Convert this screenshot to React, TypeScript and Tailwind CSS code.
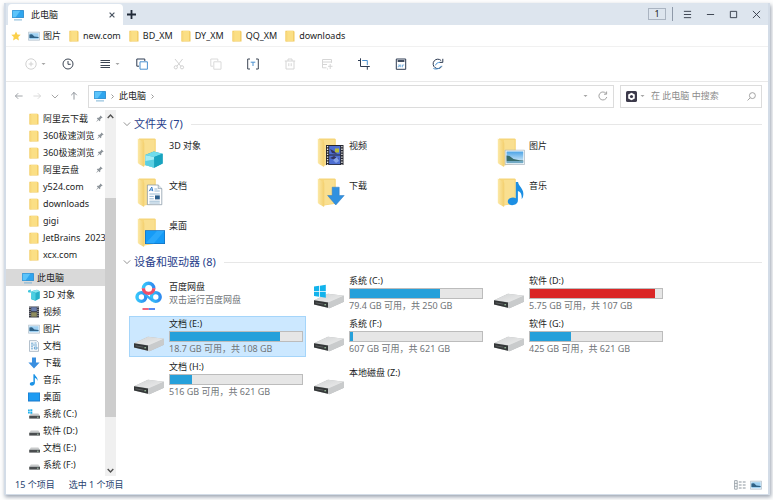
import React from 'react';

type IconName =
  | 'pc' | 'folder' | 'cube' | 'video' | 'picture' | 'doc' | 'download' | 'music' | 'desktop' | 'drive' | 'windrive';

const SmallIcon = ({ name }: { name: IconName }) => (
  <svg viewBox="0 0 12 12" className="w-3 h-3 shrink-0" aria-hidden="true">
    {name === 'pc' && (
      <>
        <rect x="0" y="1" width="12" height="8" rx="0.4" fill="#3b8fc9" />
        <path d="M.7 1.7h10.6v6.6H.7z" fill="#2fa5ee" />
        <path d="M.7 1.7h7.6L3.7 8.3h-3z" fill="#5cc4fa" />
        <path d="M2 10.4h8v1H2z" fill="#7db4d6" />
      </>
    )}
    {name === 'folder' && (
      <>
        <path d="M1.5.7h8l1 1v9.8h-9z" fill="#f0c75c" />
        <path d="M3 .9h6.3v10.2H3z" fill="#fbdf85" />
        <path d="M1.5.9 3.4 2v9.5l-1.9-.3z" fill="#f8d77a" />
      </>
    )}
    {name === 'cube' && (
      <>
        <path d="M3.5 2.2 9 .8l2.8 1.4v7.2L7.4 11.8l-4.2-1.6z" fill="#27b0c9" />
        <path d="M3.5 2.2 9 .8l2.8 1.4-4.2 1.5z" fill="#8be6f0" />
        <path d="m3.3 2.5 4.2 1.4v7.7l-4.2-1.5z" fill="#4ccfe2" />
        <path d="m0 1.6 2.8-1v3.2L0 3.2z" fill="#3fc6dd" />
      </>
    )}
    {name === 'video' && (
      <>
        <path d="M1 .5h10v11H1z" fill="#3a3d47" />
        <path d="M3.2 1.2h5.6v4H3.2z" fill="#6b7fae" />
        <path d="M3.2 6.3h5.6v4.4H3.2z" fill="#8f8d5e" />
        <path d="M2 1v10M10 1v10" stroke="#e3e3e3" strokeWidth=".8" strokeDasharray="1 1" />
      </>
    )}
    {name === 'picture' && (
      <>
        <path d="M.4 2.2h11.2v8H.4z" fill="#f4f8fb" stroke="#a9bac8" strokeWidth=".7" />
        <path d="M1.4 3.2h9.2v6H1.4z" fill="#9ed0f2" />
        <path d="m1.4 4.4 2.6-.2 2.4 2.4 4.2.4v1H1.4z" fill="#2f6287" />
      </>
    )}
    {name === 'doc' && (
      <>
        <path d="M1.5.6h7l2 2v8.8h-9z" fill="#f7fafc" stroke="#95a8b8" strokeWidth=".7" />
        <path d="M3 3.2h2.4M6.5 3h2M3 5h6M3 6.8h2M6.4 7h2.6v2H6.4zM3 8.8h2" stroke="#4e94c8" strokeWidth=".8" fill="none" />
      </>
    )}
    {name === 'download' && <path d="M4 .6h4v5h3.6L6 11.6.4 5.6H4z" fill="#3a8fe0" />}
    {name === 'music' && (
      <path d="M5.4.3h1.3c.3 2.2 3.6 2.8 2.7 6.6-.3-1.7-1.2-2.4-2.5-2.8v5c0 3-5 3.4-5.1 1 0-1.7 2.1-2.4 3.6-1.8z" fill="#1c93e6" />
    )}
    {name === 'desktop' && (
      <>
        <path d="M0 1.5h12v9H0z" fill="#1a78c8" />
        <path d="M.6 2.1h10.8v7.4H.6z" fill="#1e9bf2" />
      </>
    )}
    {(name === 'drive' || name === 'windrive') && (
      <>
        <path d="M2.8 5.4h7.6L12 8H1.2z" fill="#c9cbcc" />
        <path d="M1.2 7.8H12v2.8H1.2z" fill="#4a4d4f" />
        <path d="M9 9.2h1.6" stroke="#bfe3c5" strokeWidth=".8" />
      </>
    )}
    {name === 'windrive' && <path d="M0 1.5h1.8v1.8H0zM2.3 1.2h2v2.1h-2zM0 3.8h1.8v1.8H0zM2.3 3.8h2v2h-2z" fill="#1fb0ec" />}
  </svg>
);

const BigFolder = ({ name }: { name: IconName }) => (
  <svg viewBox="0 0 30 30" className="w-[30px] h-[30px] shrink-0" aria-hidden="true">
    <defs>
      <linearGradient id="fold" x1="0" x2="1">
        <stop offset="0" stopColor="#fce9a8" />
        <stop offset="1" stopColor="#f3cf6d" />
      </linearGradient>
      <linearGradient id="sky" x1="0" y1="0" x2="0" y2="1">
        <stop offset="0" stopColor="#4ba3e6" />
        <stop offset="1" stopColor="#e6f4fb" />
      </linearGradient>
    </defs>
    <path d="M4 .5h15.8l1 .8v24.4L9 27.5 4 26z" fill="#f6d67b" />
    <path d="M9 2h10.5v23L9 27z" fill="#f9df90" />
    <path d="M2.8.6 8.6 4q.7.5.7 1.4v22.4q0 1.4-1.2.8L3.7 25.8q-.9-.5-.9-1.4z" fill="url(#fold)" />
    {name === 'cube' && (
      <>
        <path d="m10.2 17 8.6-3.6 8.8 2.4v9.7l-8.4 4.2-9-2.6z" fill="#1d9fba" />
        <path d="m10.2 17 8.6-3.6 8.8 2.4-8.4 3.3z" fill="#6fdcec" />
        <path d="m10.2 17 9 2.1v10.6l-9-2.6z" fill="#a4edf5" />
        <path d="m10.2 23 9-1.5v8.2l-9-2.6z" fill="#5bcfe2" />
        <path d="m19.2 19.1 8.4-3.3v9.7l-8.4 4.2z" fill="#18a3bf" />
      </>
    )}
    {name === 'video' && (
      <>
        <path d="M11 7h17.5v20H11z" fill="#26272f" />
        <path d="M14.2 8h11v8.4h-11zM14.2 17.4h11v8.8h-11z" fill="#4e6fd3" />
        <path d="M20 10.5h4v4h-4z" fill="#b8bd36" />
        <path d="m15 11 4 2 3 3-5-1zM15 20l4-2 5 3-4 1z" fill="#33335f" />
        <path d="m18 22 4-3 2 4-3 2z" fill="#86a3e9" />
        <path d="M12.6 8v19M26.9 8v19" stroke="#f1f1f1" strokeWidth="1.3" strokeDasharray="1.3 1.3" />
      </>
    )}
    {name === 'picture' && (
      <>
        <path d="M10.2 12.2h19.3v14.3H10.2z" fill="#fbfdfe" stroke="#98a8b5" strokeWidth=".6" />
        <path d="M11.5 13.5h16.8v11.7H11.5z" fill="url(#sky)" />
        <path d="m11.5 17.6 3 .4 4 3 6 1.2 3.8.2v.9H11.5z" fill="#376b6b" />
        <path d="M11.5 23h16.8v2.2H11.5z" fill="#71a9c4" />
      </>
    )}
    {name === 'doc' && (
      <>
        <path d="M12.4 7h10.8l3.6 3.6v16.1H12.4z" fill="#fff" stroke="#7e8f9f" strokeWidth=".7" />
        <path d="M23.2 7v3.6h3.6" fill="#dbe5ec" stroke="#7e8f9f" strokeWidth=".6" />
        <path d="m14.2 13.2 2.6-4.2 1 4.2M15.2 12h2.4" stroke="#2874c4" strokeWidth=".9" fill="none" />
        <path d="M19.4 11h3M19.4 13h5.4M14.4 16h10.4M14.4 18.4h4.4M14.4 20.8h4.4M14.4 23.2h10.4M14.4 25h10.4" stroke="#7fa8c8" strokeWidth=".8" />
        <path d="M20 17.4h4.8v4H20z" fill="#2c5f8c" />
      </>
    )}
    {name === 'download' && <path d="M17.2 9.2h7v8.3h5L20.8 27l-8.2-9.5h4.6z" fill="#3191e0" stroke="#2a78c0" strokeWidth=".5" />}
    {name === 'music' && (
      <path d="M20.8 4h2.3c.3 4.6 6.6 6.6 5 14.2-.3 1.4-.8 2.2-1.5 2.9.6-4.8-.9-7.2-3.7-8.2v9.3c0 5.9-9.9 6.6-10.1 1.6-.2-3.6 4.8-5.1 8-3.6z" fill="#1c8fe3" />
    )}
    {name === 'desktop' && (
      <>
        <path d="M10 12.2h20V26H10z" fill="#1470bd" />
        <path d="M10.7 12.9h18.6v12.4H10.7z" fill="#159bf7" />
        <path d="M22 12.9h7.3L19 25.3h-8.3z" fill="#2aa8fb" />
      </>
    )}
  </svg>
);

const DeviceIcon = ({ kind }: { kind: string }) => (
  <svg viewBox="0 0 31 41" className="w-[31px] h-[41px] shrink-0" aria-hidden="true">
    <defs>
      <linearGradient id="metal" x1="0" y1="0" x2="1" y2="1">
        <stop offset="0" stopColor="#d2d4d5" />
        <stop offset="1" stopColor="#ededed" />
      </linearGradient>
      <linearGradient id="cloud" x1="0" x2="1">
        <stop offset="0" stopColor="#35c5fb" />
        <stop offset="1" stopColor="#2f8cf0" />
      </linearGradient>
    </defs>
    {kind === 'baidu' ? (
      <>
        <g fill="none" strokeWidth="3.4">
          <circle cx="7.4" cy="24" r="4.4" stroke="url(#cloud)" />
          <circle cx="21.8" cy="24" r="4.4" stroke="url(#cloud)" />
          <path d="m10.6 20.8 4 3.6q1 .8 2 1.6l2 1.4" stroke="#33aaf6" strokeWidth="2.4" />
          <path d="M9.4 15.4a5.2 5.2 0 0 1 10.4 0" stroke="url(#cloud)" />
          <path d="M19.8 15.2a5.2 5.2 0 0 1-10.4 0" stroke="#ef4e68" />
        </g>
        <path d="M8.5 35.2h6.3v1.6H8.5z" fill="#f03e5c" />
        <path d="M14.8 35.2H21v1.6h-6.2z" fill="#2d6bef" />
      </>
    ) : (
      <>
        <path d="M0 27.2 14 20.8 30 22.8v6L15.5 35.2 0 31.6z" fill="#b7b9ba" />
        <path d="M0 27.2 14 20.8l16 2-14 6.6z" fill="url(#metal)" />
        <path d="m14 29.6 16-6.8v6l-14.5 6.4-1.5-.3z" fill="#c9cbcc" />
        <path d="m0 27.2 14 2.2v5.4L0 31.6z" fill="#333637" />
        <path d="m1.5 29.8 8 1.4" stroke="#6b6e70" strokeWidth=".7" />
        <path d="M10.4 31.8h1.7" stroke="#b6e4b9" strokeWidth="1" />
      </>
    )}
    {kind === 'system' && (
      <path d="m0 13.6 5.1-.8v5.1H0zM5.9 12.7l5.9-.9v6.1H5.9zM0 18.7h5.1v5L0 23zM5.9 18.7h5.9v6l-5.9-.9z" fill="#12b3ec" />
    )}
  </svg>
);

const toolbar = [
  { label: '新建', color: 'text-[#d2d2d2]', caret: true, icon: <><circle cx="6" cy="6" r="5.2" /><path d="M6 3.7v4.6M3.7 6h4.6" /></> },
  { label: '历史', color: 'text-[#3d4654]', icon: <><circle cx="6" cy="6" r="5" /><path d="M6 3v3.3h2.7" /></> },
  { label: '视图', color: 'text-[#3d4654]', caret: true, icon: <path d="M1.5 2.5h9.5M1.5 4.5h9.5M1.5 7.5h9.5M1.5 9.5h9.5" /> },
  { label: '复制到', color: 'text-[#2d3b52]', icon: <><path d="M3 8.2H.8V1h8v2" /><path d="M4 3.8h7.4v7.4H4z" stroke="#4a90cf" /></> },
  { label: '剪切', color: 'text-[#d2d2d2]', icon: <><path d="m2 1 5.8 7.2M9.6 1 4 8.2" /><circle cx="2.8" cy="9.3" r="1.6" /><circle cx="9" cy="9.3" r="1.6" /></> },
  { label: '粘贴', color: 'text-[#dadada]', icon: <><path d="M3 8.2H.8V1h7v2" /><path d="M3.8 3.8h7.2v7.4H3.8z" /></> },
  { label: '重命名', color: 'text-[#3d4654]', icon: <><path d="M3 1H.7v10H3M9 1h2.3v10H9" /><path d="M3.7 4.2h4.6M6 4.2V8" stroke="#4a90cf" /></> },
  { label: '删除', color: 'text-[#d6d6d6]', icon: <path d="M.8 3h10.4M4 3V1h4v2M2 3v8h8V3M4.8 5.2v3M7.2 5.2v3" /> },
  { label: '属性', color: 'text-[#d6d6d6]', icon: <path d="M5.5 9.8h-4V1.5h9v3.3M1.5 4h9M7 8.3h4.5M9.2 6v5M2 6.5h4M6 11h1" /> },
  { label: '裁剪', color: 'text-[#2d3b52]', icon: <><path d="M0 2.5h2.5M2.5.3v8.2h9.3M9.3 8.5v3.2" /><path d="M4.2 2.5h5.1v4.6" stroke="#4a90cf" /></> },
  { label: '转为PDF', color: 'text-[#2d3b52]', icon: <><path d="M1.3 1h9.4v10.3H1.3z" /><path d="M2.6 3h6.8" strokeWidth="1.8" /><path d="M3.2 7h1.4v1.3H3.2v1M5.7 6.5v2.7M7.4 9.3V7h1.8" stroke="#5da0d8" strokeWidth=".8" /></> },
  { label: '刷新', color: 'text-[#2d3b52]', icon: <><path d="M9.8 8.4A4.7 4.7 0 1 1 9.2 2.6M10.8.8v3.6H7.2" /><path d="M1.4 10.4c1.4 1 5.6 1.2 8.2-2.6M3.4 7.4c.6-2 2.4-3 4.6-3" stroke="#4a90cf" /></> },
];

const bookmarks: { name: string; icon: IconName }[] = [
  { name: '图片', icon: 'picture' },
  { name: 'new.com', icon: 'folder' },
  { name: 'BD_XM', icon: 'folder' },
  { name: 'DY_XM', icon: 'folder' },
  { name: 'QQ_XM', icon: 'folder' },
  { name: 'downloads', icon: 'folder' },
];

const quickAccess = [
  { name: '阿里云下载', pinned: true },
  { name: '360极速浏览', pinned: true },
  { name: '360极速浏览', pinned: true },
  { name: '阿里云盘', pinned: true },
  { name: 'y524.com', pinned: true },
  { name: 'downloads' },
  { name: 'gigi' },
  { name: 'JetBrains  2023' },
  { name: 'xcx.com' },
];

const pcTree: { name: string; icon: IconName }[] = [
  { name: '3D 对象', icon: 'cube' },
  { name: '视频', icon: 'video' },
  { name: '图片', icon: 'picture' },
  { name: '文档', icon: 'doc' },
  { name: '下载', icon: 'download' },
  { name: '音乐', icon: 'music' },
  { name: '桌面', icon: 'desktop' },
  { name: '系统 (C:)', icon: 'windrive' },
  { name: '软件 (D:)', icon: 'drive' },
  { name: '文档 (E:)', icon: 'drive' },
  { name: '系统 (F:)', icon: 'drive' },
];

const folders: { name: string; icon: IconName }[] = [
  { name: '3D 对象', icon: 'cube' },
  { name: '视频', icon: 'video' },
  { name: '图片', icon: 'picture' },
  { name: '文档', icon: 'doc' },
  { name: '下载', icon: 'download' },
  { name: '音乐', icon: 'music' },
  { name: '桌面', icon: 'desktop' },
];

interface Device {
  name: string;
  kind: string;
  info?: string;
  used?: number;
  full?: boolean;
  selected?: boolean;
}

const devices: Device[] = [
  { name: '百度网盘', kind: 'baidu', info: '双击运行百度网盘' },
  { name: '系统 (C:)', kind: 'system', info: '79.4 GB 可用，共 250 GB', used: 68 },
  { name: '软件 (D:)', kind: 'drive', info: '5.75 GB 可用，共 107 GB', used: 95, full: true },
  { name: '文档 (E:)', kind: 'drive', info: '18.7 GB 可用，共 108 GB', used: 83, selected: true },
  { name: '系统 (F:)', kind: 'drive', info: '607 GB 可用，共 621 GB', used: 2 },
  { name: '软件 (G:)', kind: 'drive', info: '425 GB 可用，共 621 GB', used: 31 },
  { name: '文档 (H:)', kind: 'drive', info: '516 GB 可用，共 621 GB', used: 17 },
  { name: '本地磁盘 (Z:)', kind: 'drive' },
];

const Line = ({ d, className }: { d: string; className: string }) => (
  <svg viewBox="0 0 10 10" fill="none" stroke="currentColor" className={className} aria-hidden="true">
    <path d={d} />
  </svg>
);

const Caret = () => (
  <svg viewBox="0 0 5 4" className="w-[5px] h-1 shrink-0 text-[#a5a5a5]" aria-hidden="true">
    <path d="M.5 1h4L2.5 3z" fill="currentColor" />
  </svg>
);

const Pin = () => (
  <svg viewBox="0 0 8 8" className="w-[7px] h-[7px] mr-[2px] shrink-0" aria-hidden="true">
    <path d="m5 .5 2.6 2.4-.8.5-.5-.1-1.5 1.7.1 1.5-.7.6-1.4-1.5L.7 7.6l-.3-.2 1.8-2.3L.9 3.8l.8-.7 1.4.1 1.5-1.5V1z" fill="#8e959b" />
  </svg>
);

const SectionTitle = ({ children }: { children: React.ReactNode }) => (
  <h2 className="flex items-center gap-2 text-[11px] leading-4 text-[#27408b]">
    <button className="flex items-center gap-[3px] whitespace-nowrap">
      <Line d="m1 3 4 4 4-4" className="w-2 h-2 text-[#777]" />
      {children}
    </button>
    <span className="flex-1 h-px bg-[#e7e7e7]" />
  </h2>
);

const DeviceTile = ({ device }: { device: Device }) => (
  <button
    className={
      device.selected
        ? 'flex items-start gap-1 h-[41px] pl-[5px] pr-[3px] text-left bg-[#cce8ff] outline outline-1 -outline-offset-1 outline-[#a5d5fa]'
        : 'flex items-start gap-1 h-[41px] pl-[5px] pr-[3px] text-left'
    }
  >
    <DeviceIcon kind={device.kind} />
    <span className={device.used !== undefined ? 'flex-1 pt-[2px]' : 'flex-1 pt-2'}>
      <span className="block">{device.name}</span>
      {device.used !== undefined && (
        <span className="block h-[11px] mt-px border border-[#bcbcbc] bg-[#e6e6e6]">
          <span
            className={device.full ? 'block h-full bg-[#da2626]' : 'block h-full bg-[#26a0da]'}
            style={{ width: `${device.used}%` }}
          />
        </span>
      )}
      {device.info && <span className="block mt-px text-[#707478] whitespace-nowrap">{device.info}</span>}
    </span>
  </button>
);

export default function App() {
  return (
    <div className="h-screen bg-[#fdfdfd] pt-[3px] pl-1 pr-[3px] pb-[5px] font-['Noto_Sans','Noto_Sans_CJK_SC',sans-serif] text-[9px] leading-3 text-[#1b1d24]">
      <div className="h-full flex flex-col bg-white border-x-2 border-b border-[#d3dce7] shadow-[1px_2px_4px_#9aa3b0]">
        <header className="h-[22px] shrink-0 flex items-end bg-[#dde5ee]">
          <div className="flex items-center w-[115px] h-[21px] ml-[2px] px-1 bg-white rounded-t-sm">
            <SmallIcon name="pc" />
            <span className="flex-1 ml-[7px]">此电脑</span>
            <button aria-label="关闭标签页" className="p-1">
              <Line d="m1 1 8 8M9 1 1 9" className="w-[6px] h-[6px] stroke-2 text-[#4b5563]" />
            </button>
          </div>
          <button aria-label="新建标签页" className="h-[21px] ml-1 flex items-center">
            <Line d="M5 0v10M0 5h10" className="w-[9px] h-[9px] stroke-2 text-[#1f2937]" />
          </button>
          <div className="flex-1" />
          <div className="flex items-center h-[22px]">
            <button className="w-[18px] h-3 border border-[#aab4c1] leading-[10px] text-center">1</button>
            <span className="w-px h-[14px] ml-[6px] mr-[3px] bg-[#8e99a8]" />
            <button aria-label="菜单" className="w-[23px] flex justify-center text-[#2f3744]">
              <Line d="M1 1.5h8M1 5h8M1 8.5h8" className="w-[9px] h-[9px]" />
            </button>
            <button aria-label="最小化" className="w-[23px] flex justify-center text-[#2f3744]">
              <Line d="M1 5h8" className="w-[9px] h-[9px]" />
            </button>
            <button aria-label="最大化" className="w-[23px] flex justify-center text-[#2f3744]">
              <Line d="M1.5 1.5h7v7h-7z" className="w-[9px] h-[9px]" />
            </button>
            <button aria-label="关闭" className="w-[23px] flex justify-center text-[#2f3744]">
              <Line d="m1 1 8 8M9 1 1 9" className="w-[9px] h-[9px]" />
            </button>
          </div>
        </header>

        <nav className="h-[22px] shrink-0 flex items-center gap-[7px] pl-[5px] border-b border-[#f1f1f1]">
          <svg viewBox="0 0 10 10" className="w-[10px] h-[10px]" aria-hidden="true">
            <path d="m5 .4 1.4 3 3.3.4-2.4 2.3.6 3.3L5 7.8 2.1 9.4l.6-3.3L.3 3.8l3.3-.4z" fill="#fbd04a" />
          </svg>
          {bookmarks.map((b) => (
            <a key={b.name} href="#" className="flex items-center gap-[3px]">
              <SmallIcon name={b.icon} />
              {b.name}
            </a>
          ))}
        </nav>

        <div className="h-[35px] shrink-0 flex items-center pl-[7px] border-b border-[#e9e9e9]">
          {toolbar.map((t) => (
            <button key={t.label} aria-label={t.label} className="w-[37px] h-6 pl-3 flex items-center gap-1">
              <svg viewBox="0 0 12 12" fill="none" stroke="currentColor" className={`w-3 h-3 shrink-0 ${t.color}`}>
                {t.icon}
              </svg>
              {t.caret && <Caret />}
            </button>
          ))}
        </div>

        <div className="h-7 shrink-0 flex items-center pl-[9px] pr-[6px]">
          <button aria-label="后退" className="w-[18px]">
            <Line d="M9.5 5h-9M4 1.5.5 5 4 8.5" className="w-2 h-2 text-[#8a8f96]" />
          </button>
          <button aria-label="前进" className="w-[18px]">
            <Line d="M.5 5h9M6 1.5 9.5 5 6 8.5" className="w-2 h-2 text-[#d0d0d0]" />
          </button>
          <button aria-label="最近位置" className="w-[19px]">
            <Line d="m1 3.5 4 4 4-4" className="w-2 h-2 text-[#8f8f8f]" />
          </button>
          <button aria-label="向上" className="w-[18px]">
            <Line d="M5 9.5v-9M1.5 4 5 .5 8.5 4" className="w-2 h-2 text-[#777d86]" />
          </button>
          <div className="flex-1 h-[23px] flex items-center gap-1 px-[5px] border border-[#dcdcdc]">
            <SmallIcon name="pc" />
            <Line d="m3 1 4 4-4 4" className="w-[5px] h-[5px] stroke-2 text-[#999]" />
            <a href="#">此电脑</a>
            <Line d="m3 1 4 4-4 4" className="w-[5px] h-[5px] stroke-2 text-[#999]" />
            <span className="flex-1" />
            <button aria-label="历史地址" className="mr-[6px]"><Caret /></button>
            <button aria-label="刷新地址">
              <Line d="M8.8 6A4 4 0 1 1 8 2.4M8.6.5v2.7H6" className="w-[10px] h-[10px] text-[#a3a3a3]" />
            </button>
          </div>
          <div className="w-[142px] h-[23px] ml-[6px] flex items-center px-[5px] border border-[#dcdcdc]">
            <svg viewBox="0 0 11 11" className="w-[11px] h-[11px] shrink-0" aria-hidden="true">
              <rect width="11" height="11" rx="1.6" fill="#3c3a4b" />
              <path d="m5.5 1.7 3.3 1.9v3.8L5.5 9.3 2.2 7.4V3.6z" fill="#fff" />
              <circle cx="5.5" cy="5.5" r="1.6" fill="#3c3a4b" />
            </svg>
            <button aria-label="搜索选项" className="ml-[3px] mr-[6px]"><Caret /></button>
            <input
              aria-label="搜索"
              placeholder="在 此电脑 中搜索"
              className="flex-1 min-w-0 outline-none placeholder:text-[#8b8b8b]"
            />
            <button aria-label="开始搜索">
              <svg viewBox="0 0 10 10" fill="none" stroke="#999" className="w-[9px] h-[9px]">
                <circle cx="6" cy="4" r="3.3" />
                <path d="M3.6 6.4.6 9.4" />
              </svg>
            </button>
          </div>
        </div>

        <div className="flex-1 min-h-0 flex">
          <aside className="w-[99px] shrink-0 overflow-hidden">
            <ul>
              {quickAccess.map((q, i) => (
                <li key={i}>
                  <button className="w-full h-[17px] flex items-center gap-[3px] pl-[22px] text-left whitespace-pre">
                    <SmallIcon name="folder" />
                    <span className="flex-1">{q.name}</span>
                    {q.pinned && <Pin />}
                  </button>
                </li>
              ))}
            </ul>
            <button className="w-full h-[17px] mt-[6px] flex items-center gap-[3px] pl-4 bg-[#d9d9d9] text-left">
              <SmallIcon name="pc" />
              此电脑
            </button>
            <ul>
              {pcTree.map((p) => (
                <li key={p.name}>
                  <button className="w-full h-[17px] flex items-center gap-[3px] pl-[22px] text-left">
                    <SmallIcon name={p.icon} />
                    {p.name}
                  </button>
                </li>
              ))}
            </ul>
          </aside>
          <div className="w-[11px] shrink-0 flex flex-col items-stretch bg-[#f0f0f0]">
            <button aria-label="向上滚动" className="h-3 flex items-center justify-center">
              <Line d="m1 7 4-4 4 4" className="w-[7px] h-[7px] stroke-2 text-[#505050]" />
            </button>
            <span className="flex-[76]" />
            <span className="flex-[218] bg-[#cdcdcd]" />
            <span className="flex-[47]" />
            <button aria-label="向下滚动" className="h-3 flex items-center justify-center">
              <Line d="m1 3 4 4 4-4" className="w-[7px] h-[7px] stroke-2 text-[#505050]" />
            </button>
          </div>

          <main className="flex-1 min-w-0 overflow-hidden pl-[7px] pt-[6px] pr-[6px]">
            <SectionTitle>文件夹 (7)</SectionTitle>
            <div className="grid grid-cols-[repeat(auto-fill,177px)] gap-x-[3px] pl-[6px] pt-[6px]">
              {folders.map((f) => (
                <button key={f.name} className="h-10 flex items-start gap-1 pl-[6px] text-left">
                  <BigFolder name={f.icon} />
                  <span className="pt-[2px]">{f.name}</span>
                </button>
              ))}
            </div>
            <div className="-mt-1">
              <SectionTitle>设备和驱动器 (8)</SectionTitle>
            </div>
            <div className="grid grid-cols-[repeat(auto-fill,177px)] gap-x-[3px] gap-y-[2px] pl-[6px] pt-[3px]">
              {devices.map((d) => (
                <DeviceTile key={d.name} device={d} />
              ))}
            </div>
          </main>
        </div>

        <footer className="h-[18px] shrink-0 flex items-center gap-[14px] pl-[9px] pr-[6px] text-[#26426e]">
          <span>15 个项目</span>
          <span className="flex-1">选中 1 个项目</span>
          <div className="flex items-center gap-1">
            <button aria-label="详细信息">
              <svg viewBox="0 0 12 10" className="w-3 h-[10px]" fill="none" stroke="#8c959d">
                <path d="M.6.6h2.6v8.6H.6zM.6 3.4h2.6M.6 6.3h2.6" strokeWidth=".8" />
                <path d="M4.8 2h2.8M8.8 2h2.8M4.8 5h2.8M8.8 5h2.8M4.8 8h2.8M8.8 8h2.8" />
              </svg>
            </button>
            <button aria-label="缩略图"><SmallIcon name="picture" /></button>
          </div>
        </footer>
      </div>
    </div>
  );
}
